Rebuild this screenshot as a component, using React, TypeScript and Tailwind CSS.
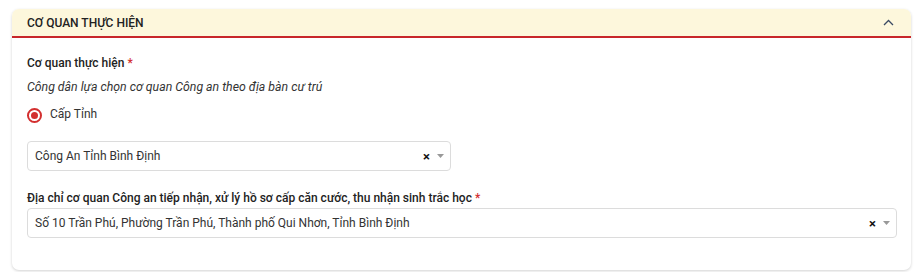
import React from 'react';

const font = { fontFamily: 'Roboto, "Liberation Sans", sans-serif' };

const SelectBox: React.FC<{ value: string; className?: string }> = ({ value, className }) => (
  <div className={`flex items-center h-[30px] border border-[#dcdcdc] rounded-[4px] bg-white pl-[7px] pr-[6px] ${className ?? ''}`}>
    <span className="flex-1 text-[12px] text-[#333] truncate">{value}</span>
    <span className="text-[13px] font-bold text-[#111] leading-none mr-[7px]">×</span>
    <svg width="7" height="4" viewBox="0 0 7 4" className="mb-[1px]">
      <path d="M0 0 L7 0 L3.5 4 Z" fill="#999" />
    </svg>
  </div>
);

export default function App() {
  return (
    <div className="w-[920px] h-[272px] bg-white pl-[12px] pt-[9px]" style={font}>
      <div className="w-[899px] h-[261px] rounded-[7px] bg-white shadow-[0_1px_3px_rgba(0,0,0,0.18)] overflow-hidden">
        {/* Header */}
        <div className="h-[29px] bg-[#fdf7dc] border-b-2 border-[#c8262a] flex items-center justify-between pl-[15px] pr-[17px]">
          <span className="text-[12px] font-medium text-[#222] uppercase">Cơ quan thực hiện</span>
          <svg width="11" height="7" viewBox="0 0 11 7" fill="none">
            <path d="M1 6 L5.5 1.5 L10 6" stroke="#3a4a63" strokeWidth="1.3" />
          </svg>
        </div>

        {/* Body */}
        <div className="px-[15px] pt-[16px]">
          <div className="text-[12px] leading-[18px] font-medium text-[#222]">
            Cơ quan thực hiện <span className="text-[#d32f2f]">*</span>
          </div>
          <div className="mt-[6px] text-[12.3px] leading-[18px] italic text-[#333]">
            Công dân lựa chọn cơ quan Công an theo địa bàn cư trú
          </div>
          <div className="mt-[9px] flex items-center h-[18px]">
            <span className="w-[15px] h-[15px] rounded-full border-2 border-[#d32f2f] flex items-center justify-center mt-[2px]">
              <span className="w-[7px] h-[7px] rounded-full bg-[#d32f2f]" />
            </span>
            <span className="ml-[8px] text-[12px] text-[#333] -mt-[1px]">Cấp Tỉnh</span>
          </div>

          <SelectBox value="Công An Tỉnh Bình Định" className="mt-[18px] w-[424px]" />

          <div className="mt-[18px] text-[12px] leading-[18px] font-medium text-[#222]">
            Địa chỉ cơ quan Công an tiếp nhận, xử lý hồ sơ cấp căn cước, thu nhận sinh trắc học{' '}
            <span className="text-[#d32f2f]">*</span>
          </div>
          <SelectBox
            value="Số 10 Trần Phú, Phường Trần Phú, Thành phố Qui Nhơn, Tỉnh Bình Định"
            className="mt-[1px] w-[870px]"
          />
        </div>
      </div>
    </div>
  );
}
